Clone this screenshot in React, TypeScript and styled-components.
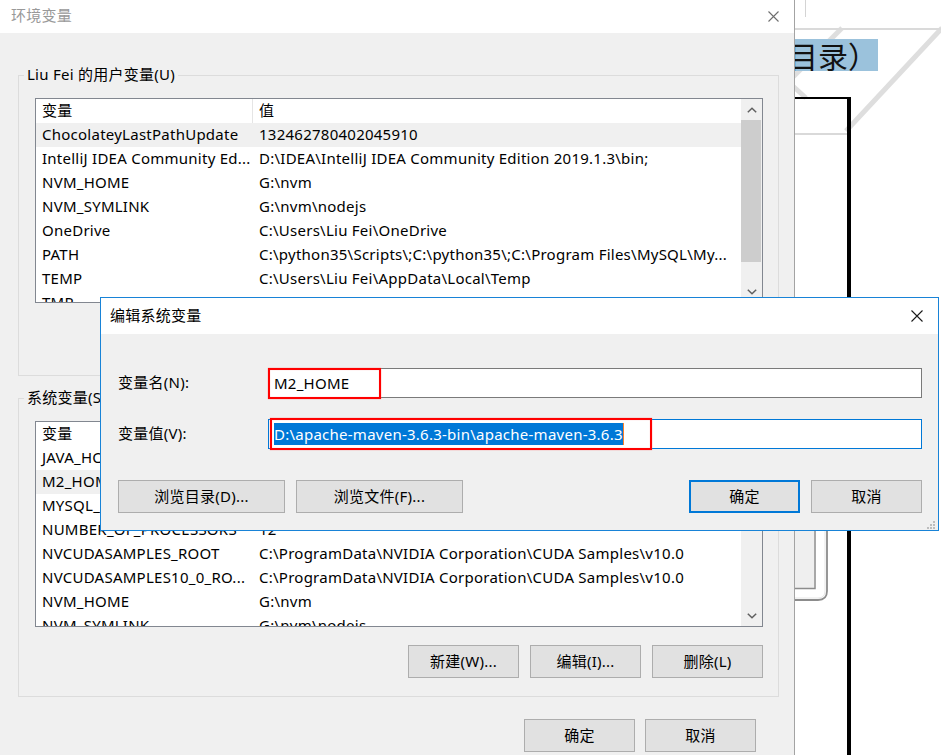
import React from 'react';
import styled, { createGlobalStyle } from 'styled-components';

const GlobalStyle = createGlobalStyle`
  html, body { margin: 0; padding: 0; background: #fff; }
  body {
    font-family: "Noto Sans", "Noto Sans CJK SC", sans-serif;
    font-size: 15px;
    letter-spacing: 0.25px;
    color: #000;
  }
  * { box-sizing: border-box; }
`;

const Desktop = styled.div`
  position: relative;
  width: 941px;
  height: 755px;
  overflow: hidden;
  background: #fff;
`;

/* ---------- background document window ---------- */
const DocWindow = styled.div`
  position: absolute;
  inset: 0;
  background: #fff;
  display: flex;
  flex-direction: column;
`;

const DocDecor = styled.svg`
  position: absolute;
  left: 0;
  top: 0;
`;

const DocToolbar = styled.div`
  position: relative;
  height: 30px;
  flex-shrink: 0;
  border-bottom: 2px solid #dadada;
  padding-left: 805px;
`;

const ToolbarSep = styled.div`
  width: 1px;
  height: 17px;
  background: #d4d4d4;
`;

const DocHeadingRow = styled.div`
  position: relative;
  display: flex;
  justify-content: flex-end;
  padding-right: 63px;
  margin-top: 9px;
`;

const Highlight = styled.span`
  background: #9bc2dc;
  font-family: "Noto Sans CJK SC", sans-serif;
  font-size: 30px;
  letter-spacing: 0;
  line-height: 32px;
  height: 32px;
  color: #111;
  white-space: nowrap;
`;

const DocFrame = styled.div`
  position: relative;
  margin-top: 26px;
  margin-left: auto;
  margin-right: 90px;
  width: 320px;
  flex: 1;
  border-top: 2px solid #000;
  border-right: 4px solid #000;
  padding-top: 34px;
`;

const FrameRule = styled.div`
  height: 2px;
  background: #d9d9d9;
`;

/* ---------- main window ---------- */
const MainWindow = styled.div`
  position: absolute;
  left: 0;
  top: 0;
  width: 795px;
  height: 790px;
  background: #f0f0f0;
  border-right: 1px solid #a3a3a3;
  display: flex;
  flex-direction: column;
`;

const TitleBar = styled.div<{ $h: number; $pl: number; $pr: number; $color: string }>`
  height: ${p => p.$h}px;
  flex-shrink: 0;
  background: #fff;
  display: flex;
  align-items: center;
  justify-content: space-between;
  padding: 0 ${p => p.$pr}px 0 ${p => p.$pl}px;
  color: ${p => p.$color};
  font-size: 15px;
`;

const TitleText = styled.span`
  margin-bottom: 4px;
`;

const MainBody = styled.div`
  display: flex;
  flex-direction: column;
  padding-left: 18px;
`;

const GroupBox = styled.div<{ $mt: number; $h: number }>`
  position: relative;
  margin-top: ${p => p.$mt}px;
  width: 761px;
  height: ${p => p.$h}px;
  border: 1px solid #dcdcdc;
  padding: 22px 15px 0 16px;
  display: flex;
  flex-direction: column;
`;

const GroupLabel = styled.span`
  position: absolute;
  left: 5px;
  top: -13px;
  padding: 0 3px 0 3px;
  line-height: 22px;
  background: #f0f0f0;
  white-space: nowrap;
`;

const ListBox = styled.div<{ $h: number }>`
  display: flex;
  width: 728px;
  height: ${p => p.$h}px;
  flex-shrink: 0;
  border: 1px solid #828790;
  background: #fff;
  overflow: hidden;
`;

const ListColumns = styled.div`
  flex: 1;
  min-width: 0;
  display: flex;
  flex-direction: column;
`;

const ListRow = styled.div<{ $selected?: boolean }>`
  display: flex;
  height: 24px;
  flex-shrink: 0;
  background: ${p => (p.$selected ? '#f0f0f0' : 'transparent')};
`;

const NameCell = styled.div<{ $header?: boolean }>`
  width: 217px;
  flex-shrink: 0;
  padding-left: 6px;
  line-height: 23px;
  white-space: nowrap;
  overflow: hidden;
  border-right: 1px solid ${p => (p.$header ? '#e5e5e5' : 'transparent')};
`;

const ValueCell = styled.div`
  flex: 1;
  min-width: 0;
  padding-left: 6px;
  line-height: 23px;
  white-space: nowrap;
  overflow: hidden;
`;

const ScrollBar = styled.div`
  width: 21px;
  flex-shrink: 0;
  background: #f0f0f0;
  display: flex;
  flex-direction: column;
`;

const ScrollArrow = styled.div`
  height: 21px;
  flex-shrink: 0;
  display: flex;
  align-items: center;
  justify-content: center;
`;

const ScrollTrack = styled.div<{ $offset: number }>`
  flex: 1;
  padding-top: ${p => p.$offset}px;
  display: flex;
  flex-direction: column;
`;

const ScrollThumb = styled.div<{ $size: number }>`
  height: ${p => p.$size}px;
  margin-right: 1px;
  background: #cdcdcd;
`;

const ButtonRow = styled.div<{ $mt: number; $gap: number; $pr?: number }>`
  display: flex;
  justify-content: flex-end;
  gap: ${p => p.$gap}px;
  margin-top: ${p => p.$mt}px;
  padding-right: ${p => p.$pr ?? 0}px;
`;

const WinButton = styled.button<{ $w: number; $default?: boolean }>`
  width: ${p => p.$w}px;
  height: 33px;
  padding: 0 0 2px 0;
  flex-shrink: 0;
  background: #e1e1e1;
  border: ${p => (p.$default ? '2px solid #0078d7' : '1px solid #adadad')};
  font-family: inherit;
  font-size: 15px;
  letter-spacing: inherit;
  color: #000;
`;

/* ---------- edit dialog ---------- */
const Dialog = styled.div`
  position: absolute;
  left: 100px;
  top: 297px;
  width: 839px;
  height: 234px;
  background: #f0f0f0;
  border: 1px solid #1883d7;
  display: flex;
  flex-direction: column;
`;

const DialogBody = styled.div`
  position: relative;
  flex: 1;
  padding: 34px 16px 0 17px;
  display: flex;
  flex-direction: column;
`;

const FieldRow = styled.div<{ $mt: number }>`
  display: flex;
  align-items: center;
  height: 30px;
  margin-top: ${p => p.$mt}px;
`;

const FieldLabel = styled.label`
  width: 150px;
  flex-shrink: 0;
  padding-bottom: 3px;
  white-space: nowrap;
`;

const TextField = styled.div<{ $focused?: boolean }>`
  position: relative;
  width: 655px;
  height: 30px;
  background: #fff;
  border: 1px solid ${p => (p.$focused ? '#0078d7' : '#7a7a7a')};
  display: flex;
  align-items: center;
  padding: 0 0 1px 5px;
  white-space: nowrap;
`;

const SelectedText = styled.span`
  background: #0078d7;
  color: #fff;
  line-height: 22px;
  box-shadow: 1px 0 0 #ff7f27;
`;

const RedMark = styled.div<{ $l: number; $t: number; $w: number; $h: number }>`
  position: absolute;
  left: ${p => p.$l}px;
  top: ${p => p.$t}px;
  width: ${p => p.$w}px;
  height: ${p => p.$h}px;
  border: 2px solid #ff0000;
  box-shadow: 0 0 1px #ff6a6a, inset 0 0 1px #ff8a8a;
  pointer-events: none;
`;

const DialogButtons = styled.div`
  display: flex;
  gap: 11px;
  margin-top: 31px;
`;

const Spacer = styled.div`
  flex: 1;
`;

const Grip = styled.svg`
  position: absolute;
  right: 3px;
  bottom: 1px;
`;

/* ---------- icons ---------- */
const Chevron = ({ down }: { down?: boolean }) => (
  <svg width="10" height="6" viewBox="0 0 10 6">
    <path
      d={down ? 'M0.8 0.8 L5 4.8 L9.2 0.8' : 'M0.8 5.2 L5 1.2 L9.2 5.2'}
      fill="none"
      stroke="#606060"
      strokeWidth="1.5"
    />
  </svg>
);

const CloseIcon = ({ color, size }: { color: string; size: number }) => (
  <svg width={size} height={size} viewBox={`0 0 ${size} ${size}`}>
    <path d={`M0.5 0.5 L${size - 0.5} ${size - 0.5} M${size - 0.5} 0.5 L0.5 ${size - 0.5}`} stroke={color} strokeWidth="1.1" />
  </svg>
);

/* ---------- data ---------- */
type Row = [string, string];

const userVars: Row[] = [
  ['ChocolateyLastPathUpdate', '132462780402045910'],
  ['IntelliJ IDEA Community Ed...', 'D:\\IDEA\\IntelliJ IDEA Community Edition 2019.1.3\\bin;'],
  ['NVM_HOME', 'G:\\nvm'],
  ['NVM_SYMLINK', 'G:\\nvm\\nodejs'],
  ['OneDrive', 'C:\\Users\\Liu Fei\\OneDrive'],
  ['PATH', 'C:\\python35\\Scripts\\;C:\\python35\\;C:\\Program Files\\MySQL\\My...'],
  ['TEMP', 'C:\\Users\\Liu Fei\\AppData\\Local\\Temp'],
  ['TMP', 'C:\\Users\\Liu Fei\\AppData\\Local\\Temp'],
];

const sysVars: Row[] = [
  ['JAVA_HOME', 'C:\\Program Files\\Java\\jdk1.8.0_221'],
  ['M2_HOME', 'D:\\apache-maven-3.6.3-bin\\apache-maven-3.6.3'],
  ['MYSQL_HOME', 'C:\\Program Files\\MySQL\\MySQL Server 8.0'],
  ['NUMBER_OF_PROCESSORS', '12'],
  ['NVCUDASAMPLES_ROOT', 'C:\\ProgramData\\NVIDIA Corporation\\CUDA Samples\\v10.0'],
  ['NVCUDASAMPLES10_0_RO...', 'C:\\ProgramData\\NVIDIA Corporation\\CUDA Samples\\v10.0'],
  ['NVM_HOME', 'G:\\nvm'],
  ['NVM_SYMLINK', 'G:\\nvm\\nodejs'],
];

const VarList = ({
  rows,
  height,
  selected,
  thumbOffset,
  thumbSize,
}: {
  rows: Row[];
  height: number;
  selected: number;
  thumbOffset: number;
  thumbSize: number;
}) => (
  <ListBox $h={height}>
    <ListColumns>
      <ListRow>
        <NameCell $header>变量</NameCell>
        <ValueCell>值</ValueCell>
      </ListRow>
      {rows.map((r, i) => (
        <ListRow key={r[0] + i} $selected={i === selected}>
          <NameCell>{r[0]}</NameCell>
          <ValueCell>{r[1]}</ValueCell>
        </ListRow>
      ))}
    </ListColumns>
    <ScrollBar>
      <ScrollArrow>
        <Chevron />
      </ScrollArrow>
      <ScrollTrack $offset={thumbOffset}>
        <ScrollThumb $size={thumbSize} />
      </ScrollTrack>
      <ScrollArrow>
        <Chevron down />
      </ScrollArrow>
    </ScrollBar>
  </ListBox>
);

export default function App() {
  return (
    <Desktop>
      <GlobalStyle />

      <DocWindow>
        <DocDecor width="941" height="755" viewBox="0 0 941 755">
          <line x1="942" y1="28" x2="846" y2="131" stroke="#dedede" strokeWidth="5" />
          <line x1="842" y1="28" x2="790" y2="80" stroke="#dedede" strokeWidth="5" />
          <line x1="784" y1="78" x2="806" y2="98" stroke="#dedede" strokeWidth="5" />
          <path d="M794 526 L814 526 L814 588 L794 588 Z" fill="#efefef" />
          <path d="M815 520 L815 588.5 L790 588.5" fill="none" stroke="#8c8c8c" strokeWidth="1.5" />
          <path d="M827 520 L827 591 Q827 600 818 600 L790 600" fill="none" stroke="#8c8c8c" strokeWidth="1.8" />
          <path d="M825 520 L825 591 Q825 598 818 598 L790 598" fill="none" stroke="#e6e6e6" strokeWidth="1" />
        </DocDecor>
        <DocToolbar>
          <ToolbarSep />
        </DocToolbar>
        <DocHeadingRow>
          <Highlight>（目录）</Highlight>
        </DocHeadingRow>
        <DocFrame>
          <FrameRule />
        </DocFrame>
      </DocWindow>

      <MainWindow>
        <TitleBar $h={33} $pl={11} $pr={15} $color="#999999">
          <TitleText>环境变量</TitleText>
          <CloseIcon color="#6e6e6e" size={11} />
        </TitleBar>
        <MainBody>
          <GroupBox $mt={42} $h={301}>
            <GroupLabel>Liu Fei 的用户变量(U)</GroupLabel>
            <VarList rows={userVars} height={205} selected={0} thumbOffset={0} thumbSize={142} />
          </GroupBox>

          <GroupBox $mt={22} $h={299}>
            <GroupLabel>系统变量(S)</GroupLabel>
            <VarList rows={sysVars} height={206} selected={1} thumbOffset={0} thumbSize={70} />
            <ButtonRow $mt={18} $gap={11}>
              <WinButton $w={111}>新建(W)...</WinButton>
              <WinButton $w={111}>编辑(I)...</WinButton>
              <WinButton $w={111}>删除(L)</WinButton>
            </ButtonRow>
          </GroupBox>

          <ButtonRow $mt={22} $gap={10} $pr={38}>
            <WinButton $w={111}>确定</WinButton>
            <WinButton $w={111}>取消</WinButton>
          </ButtonRow>
        </MainBody>
      </MainWindow>

      <Dialog>
        <TitleBar $h={36} $pl={9} $pr={15} $color="#000000">
          <TitleText>编辑系统变量</TitleText>
          <CloseIcon color="#1a1a1a" size={12} />
        </TitleBar>
        <DialogBody>
          <FieldRow $mt={0}>
            <FieldLabel>变量名(N):</FieldLabel>
            <TextField>
              M2_HOME
              <RedMark $l={-1} $t={-1} $w={113} $h={31} />
            </TextField>
          </FieldRow>
          <FieldRow $mt={21}>
            <FieldLabel>变量值(V):</FieldLabel>
            <TextField $focused>
              <SelectedText>D:\apache-maven-3.6.3-bin\apache-maven-3.6.3</SelectedText>
              <RedMark $l={1} $t={-2} $w={382} $h={32} />
            </TextField>
          </FieldRow>
          <DialogButtons>
            <WinButton $w={167}>浏览目录(D)...</WinButton>
            <WinButton $w={167}>浏览文件(F)...</WinButton>
            <Spacer />
            <WinButton $w={111} $default>确定</WinButton>
            <WinButton $w={111}>取消</WinButton>
          </DialogButtons>
          <Grip width="9" height="9" viewBox="0 0 9 9">
            <rect x="7" y="1" width="2" height="2" fill="#bdbdbd" />
            <rect x="4" y="4" width="2" height="2" fill="#bdbdbd" />
            <rect x="7" y="4" width="2" height="2" fill="#bdbdbd" />
            <rect x="1" y="7" width="2" height="2" fill="#bdbdbd" />
            <rect x="4" y="7" width="2" height="2" fill="#bdbdbd" />
            <rect x="7" y="7" width="2" height="2" fill="#bdbdbd" />
          </Grip>
        </DialogBody>
      </Dialog>
    </Desktop>
  );
}
